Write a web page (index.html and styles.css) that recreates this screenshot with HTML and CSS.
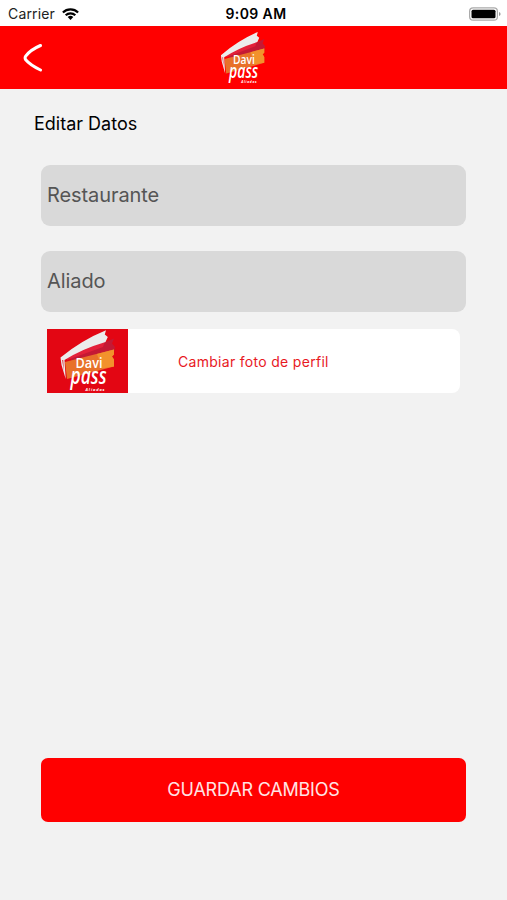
FILE: index.html
```html
<!DOCTYPE html>
<html lang="es">
<head>
<meta charset="utf-8">
<meta name="viewport" content="width=device-width">
<title>Editar Datos</title>
<link rel="stylesheet" href="styles.css">
</head>
<body>
<svg width="0" height="0" class="defs" aria-hidden="true">
  <symbol id="logo" viewBox="0 0 81 64" preserveAspectRatio="none">
    <path fill="#c41934" d="M24 27 67 9.500l-2 5 3 3.500-1 5-43 10z"/>
    <path fill="#e3203a" d="M20 28 58 12l-2 6-36 13z"/>
    <path fill="#e8712a" d="M18 33 67 20.500v5l-2 2 2 3v7L20 50z"/>
    <path fill="#f2922c" d="M50 25 67 20.500v5l-2 2 2 3v7l-12 2z"/>
    <path fill="#ececec" d="M13.500 28.500Q35 11 59 1.300L57.800 5.500l3 2.500-2.300 5Q35 20 17.500 31l1.200 19-4.200-14z"/>
    <path fill="#d51a20" d="M15.200 31h1l.6 11z"/>
    <g fill="#fff" class="logo-text">
      <text x="28.500" y="38.500" font-size="15" textLength="27" lengthAdjust="spacingAndGlyphs" font-weight="600">Davi</text>
      <text x="23.500" y="55" font-size="23" textLength="36" lengthAdjust="spacingAndGlyphs" font-style="italic" font-weight="600">pass</text>
      <text x="38.500" y="61.500" font-size="4" textLength="19" font-style="italic">Aliados</text>
    </g>
  </symbol>
</svg>
<div class="status">
  <div class="carrier"><span>Carrier</span>
    <svg width="17" height="12" viewBox="0 0 17 12" fill="none" stroke="#000" stroke-width="2.200"><path d="M.9 4.500a10.800 10.800 0 0 1 15.200 0M3.700 7.300a6.800 6.800 0 0 1 9.600 0"/><path fill="#000" stroke="none" d="M5.700 9.100a4 4 0 0 1 5.600 0L8.500 12z"/></svg>
  </div>
  <div class="time">9:09 AM</div>
  <svg class="battery" width="32" height="14" viewBox="0 0 32 14"><rect x=".6" y=".8" width="27.800" height="12.400" rx="3.500" fill="#fff" stroke="#aaa" stroke-width="1.200"/><rect x="2.500" y="2.700" width="24" height="8.600" rx="1.500"/><path d="M30 5v4q1.600-.5 1.600-2T30 5" fill="#999"/></svg>
</div>
<header class="header">
  <svg class="back" width="20" height="28" viewBox="0 0 20 28" fill="none" stroke="#fff" stroke-width="3" stroke-linecap="round"><path d="M17.500 1.500Q7 6 2.700 12.200 1.500 14 2.700 15.800 7 21 17.500 26"/></svg>
  <svg class="brand"><use href="#logo"/></svg>
</header>
<main class="content">
  <h1 class="title">Editar Datos</h1>
  <div class="field"><span>Restaurante</span></div>
  <div class="field"><span>Aliado</span></div>
  <div class="photo">
    <svg class="thumb" width="81" height="64"><use href="#logo"/></svg>
    <span class="change">Cambiar foto de perfil</span>
  </div>
  <button class="save"><span>GUARDAR CAMBIOS</span></button>
</main>
</body>
</html>
```
FILE: styles.css
```css
* { box-sizing: border-box; }
body {
  margin: 0;
  height: 900px;
  display: flex;
  flex-direction: column;
  background: #f2f2f2;
  font-family: Inter, "Liberation Sans", sans-serif;
  color: #000;
}
.defs { position: absolute; }
.logo-text { font-family: "Open Sans", sans-serif; font-weight: 700; }
.status {
  height: 26px;
  flex: none;
  display: grid;
  grid-template-columns: 1fr auto 1fr;
  align-items: center;
  padding: 1px 6px 0 8px;
  background: #fff;
  font-size: 14px;
}
.carrier { display: flex; align-items: center; gap: 7px; color: #222; letter-spacing: .15px; }
.time { font-weight: 600; letter-spacing: .4px; margin-left: 3px; }
.battery { justify-self: end; }
.header {
  height: 63px;
  flex: none;
  display: flex;
  align-items: flex-start;
  background: #f00;
}
.back { margin: 18px 0 0 23px; }
.brand { width: 65.6px; height: 54.4px; margin: 5px 0 0 167px; }
.content {
  flex: 1;
  display: flex;
  flex-direction: column;
  padding: 23px 41px 78px;
}
.title {
  margin: 0 0 29px -7px;
  font-size: 18px;
  line-height: 24px;
  font-weight: 400;
}
.title, .field, .change, .save { white-space: nowrap; }
.field {
  height: 61px;
  flex: none;
  display: flex;
  align-items: center;
  margin-bottom: 25px;
  padding-left: 6px;
  border-radius: 9px;
  background: #d9d9d9;
  color: #555;
  font-size: 20px;
}
.field span { margin-top: -1px; letter-spacing: -.08px; }
.field + .field { margin-bottom: 17px; }
.photo {
  height: 64px;
  flex: none;
  display: flex;
  align-items: center;
  margin: 0 6px;
  border-radius: 8px;
  background: #fff;
}
.thumb { background: #e30613; }
.change { margin-left: 50px; color: #e8191f; font-size: 14px; letter-spacing: .3px; }
.save {
  height: 64px;
  margin-top: auto;
  border: 0;
  border-radius: 7px;
  background: #f00;
  color: #ffe4e4;
  font: 18px Inter, "Liberation Sans", sans-serif;
  letter-spacing: -.2px;
}
.save span { position: relative; top: -1px; }
```
